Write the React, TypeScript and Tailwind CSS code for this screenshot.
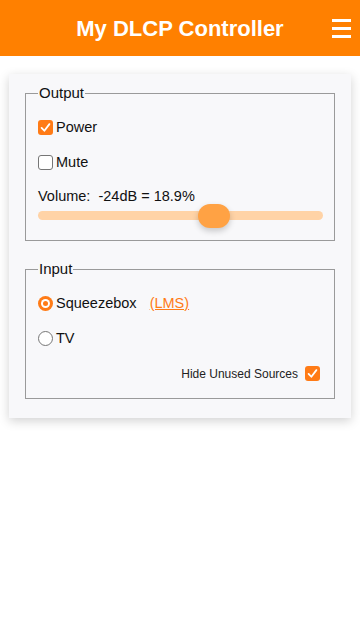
import React from 'react'

const font = "font-['Liberation_Sans',Arial,Helvetica,sans-serif]"

const CheckBox = ({ checked }: { checked: boolean }) =>
  checked ? (
    <span className="flex h-[15px] w-[15px] shrink-0 items-center justify-center rounded-[3px] bg-[#ff7b16]">
      <svg viewBox="0 0 16 16" className="h-[13px] w-[13px]" fill="none">
        <path d="M3.2 8.4 L6.6 12 L12.8 3.8" stroke="#fff" strokeWidth="2.2" strokeLinecap="round" strokeLinejoin="round" />
      </svg>
    </span>
  ) : (
    <span className="h-[15px] w-[15px] shrink-0 rounded-[3px] border border-[#767676] bg-white" />
  )

const Radio = ({ checked }: { checked: boolean }) =>
  checked ? (
    <span className="flex h-[15px] w-[15px] shrink-0 items-center justify-center rounded-full bg-[#ff7b16]">
      <span className="flex h-[9px] w-[9px] items-center justify-center rounded-full bg-white">
        <span className="h-[5px] w-[5px] rounded-full bg-[#ff7b16]" />
      </span>
    </span>
  ) : (
    <span className="h-[15px] w-[15px] shrink-0 rounded-full border border-[#767676] bg-white" />
  )

const Row = ({ children }: { children: React.ReactNode }) => (
  <div className="flex h-[35px] items-center">{children}</div>
)

const Box = ({ title, children }: { title: string; children: React.ReactNode }) => (
  <fieldset className="mb-[19px] border border-[#9a9a9a] px-[12px] pb-[7px] pt-[8px] last:mb-0">
    <legend className="px-[1px] text-[15px] leading-[18px]">{title}</legend>
    {children}
  </fieldset>
)

const App = () => {
  const volume = 18.9
  const pos = 0.619

  return (
    <div className={`${font} min-h-[617px] bg-white text-[14.5px] text-[#111]`}>
      <header className="grid h-14 grid-cols-[1fr_auto_1fr] items-center bg-[#ff8000] text-white">
        <div />
        <h1 className="text-[22px] font-bold">My DLCP Controller</h1>
        <div className="flex justify-end pr-[9px]">
          <div className="flex w-[19px] flex-col gap-[5px]">
            <span className="h-[3px] bg-white" />
            <span className="h-[3px] bg-white" />
            <span className="h-[3px] bg-white" />
          </div>
        </div>
      </header>

      <main className="mx-[9px] mt-[18px] bg-[#f8f8fa] px-[16px] pb-[19px] pt-[10px] shadow-[0_3px_10px_rgba(0,0,0,0.18)]">
        <Box title="Output">
          <Row>
            <CheckBox checked />
            <span className="ml-[3px]">Power</span>
          </Row>
          <Row>
            <CheckBox checked={false} />
            <span className="ml-[3px]">Mute</span>
          </Row>
          <div className="mt-[8px] whitespace-pre leading-[17px]">Volume:  -24dB = {volume}%</div>
          <div className="relative mt-[-1px] h-[24px]">
            <div className="absolute left-0 right-[-1px] top-[7px] h-[9px] rounded-full bg-[#ffd3a6]" />
            <div
              className="absolute top-0 h-[24px] w-[32px] rounded-[12px] bg-[#ffa244] shadow-[0_3px_6px_rgba(0,0,0,0.2)]"
              style={{ left: `calc(${pos * 100}% - 16px)` }}
            />
          </div>
          <div className="h-[5px]" />
        </Box>

        <Box title="Input">
          <Row>
            <Radio checked />
            <span className="ml-[3px]">Squeezebox</span>
            <a href="#" className="ml-[13px] text-[#ff7b16] underline">(LMS)</a>
          </Row>
          <Row>
            <Radio checked={false} />
            <span className="ml-[3px]">TV</span>
          </Row>
          <div className="flex h-[35px] items-center justify-end pr-[2px]">
            <span className="mr-[7px] text-[12px] text-[#222]">Hide Unused Sources</span>
            <CheckBox checked />
          </div>
        </Box>
      </main>
    </div>
  )
}

export default App
